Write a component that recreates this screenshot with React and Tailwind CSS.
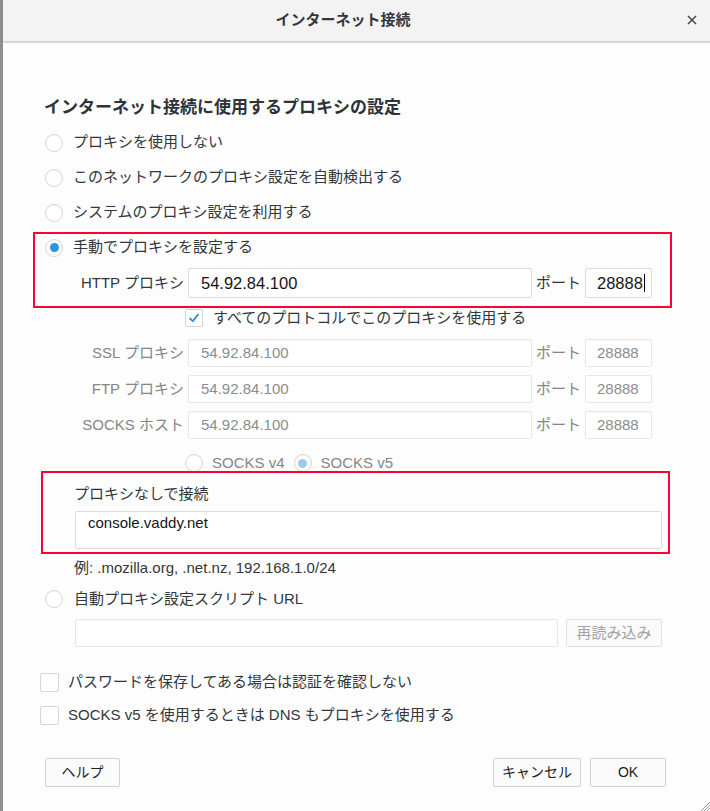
import React from "react";

const font = "font-['Liberation_Sans','Noto_Sans_CJK_JP',sans-serif]";

function Radio({ checked = false, disabled = false }) {
  return (
    <span className="w-[18px] h-[18px] shrink-0 rounded-full border border-[#d6d6d6] bg-white flex items-center justify-center shadow-[inset_0_1px_1px_rgba(0,0,0,0.04)]">
      {checked && (
        <span className={`w-[9px] h-[9px] rounded-full ${disabled ? "bg-[#9ccbea]" : "bg-[#2a96dc]"}`} />
      )}
    </span>
  );
}

function Checkbox({ checked = false, size = "w-[18px] h-[18px]" }) {
  return (
    <span className={`${size} shrink-0 rounded-[2px] border border-[#d6d6d6] bg-white flex items-center justify-center`}>
      {checked && (
        <svg width="12" height="12" viewBox="0 0 12 12">
          <path d="M2 6.5 L4.8 9.2 L10 2.6" fill="none" stroke="#2a8fd8" strokeWidth="1.8" strokeLinecap="round" strokeLinejoin="round" />
        </svg>
      )}
    </span>
  );
}

function ProxyRow({ label, value, port, enabled = false, rowH = "h-[36px]", inputH = "h-[28px]" }) {
  const valueText = enabled ? "text-[16.5px] text-[#151515]" : "text-[15px] text-[#8c8c8c]";
  return (
    <div className={`flex items-center ${rowH}`}>
      <span className={`w-[140px] text-right text-[15px] ${enabled ? "text-[#33373b]" : "text-[#868686]"}`}>{label}</span>
      <div className={`ml-[4px] w-[344px] ${inputH} bg-white border ${enabled ? "border-[#dcdcdc]" : "border-[#e6e6e6]"} rounded-[2px] flex items-center pl-[12px] ${valueText}`}>
        {value}
      </div>
      <span className={`w-[53px] pl-[4px] text-[15px] ${enabled ? "text-[#33373b]" : "text-[#868686]"}`}>ポート</span>
      <div className={`w-[67px] ${inputH} bg-white border ${enabled ? "border-[#dcdcdc]" : "border-[#e6e6e6]"} rounded-[2px] flex items-center pl-[11px] ${valueText}`}>
        {port}
        {enabled && <span className="ml-[1px] w-[1px] h-[18px] bg-black" />}
      </div>
    </div>
  );
}

export default function App() {
  return (
    <div className={`relative w-[710px] h-[811px] flex bg-[#fdfdfd] overflow-hidden ${font}`}>
      <div className="w-[3px] shrink-0 bg-[#8e8e8e]" />
      <div className="flex-1 flex flex-col">
        {/* Header */}
        <div className="h-[43px] shrink-0 bg-[#f3f3f3] border-b-2 border-[#d7d7d7] flex items-center justify-center pr-[27px] relative">
          <span className="text-[15px] font-bold text-[#34383d]">インターネット接続</span>
          <svg className="absolute right-[13px] top-[15px]" width="10" height="10" viewBox="0 0 10 10">
            <path d="M1 1 L9 9 M9 1 L1 9" stroke="#43474c" strokeWidth="1.5" />
          </svg>
        </div>

        {/* Body */}
        <div className="flex flex-col pl-[41px] pr-[44px] text-[15px] text-[#33373b]">
          <div className="mt-[53px] h-[24px] leading-[24px] text-[17px] font-bold text-[#2f3338]">
            インターネット接続に使用するプロキシの設定
          </div>

          <div className="mt-[5px] h-[35px] flex items-center">
            <span className="ml-[1px]"><Radio /></span>
            <span className="ml-[10px]">プロキシを使用しない</span>
          </div>
          <div className="h-[35px] flex items-center">
            <span className="ml-[1px]"><Radio /></span>
            <span className="ml-[10px]">このネットワークのプロキシ設定を自動検出する</span>
          </div>
          <div className="h-[35px] flex items-center">
            <span className="ml-[1px]"><Radio /></span>
            <span className="ml-[10px]">システムのプロキシ設定を利用する</span>
          </div>
          <div className="h-[35px] flex items-center">
            <span className="ml-[1px]"><Radio checked /></span>
            <span className="ml-[10px]">手動でプロキシを設定する</span>
          </div>

          <ProxyRow label="HTTP プロキシ" value="54.92.84.100" port="28888" enabled inputH="h-[30px]" />

          <div className="h-[34px] flex items-center">
            <span className="ml-[141px]"><Checkbox checked /></span>
            <span className="ml-[10px]">すべてのプロトコルでこのプロキシを使用する</span>
          </div>

          <ProxyRow label="SSL プロキシ" value="54.92.84.100" port="28888" />
          <ProxyRow label="FTP プロキシ" value="54.92.84.100" port="28888" />
          <ProxyRow label="SOCKS ホスト" value="54.92.84.100" port="28888" />

          <div className="h-[40px] flex items-center text-[#868686]">
            <span className="ml-[141px]"><Radio /></span>
            <span className="ml-[9px]">SOCKS v4</span>
            <span className="ml-[9px]"><Radio checked disabled /></span>
            <span className="ml-[9px]">SOCKS v5</span>
          </div>

          <div className="h-[22px] flex items-center">
            <span className="ml-[30px]">プロキシなしで接続</span>
          </div>
          <div className="mt-[6px] ml-[31px] w-[587px] h-[38px] bg-white border border-[#dcdcdc] rounded-[2px] pl-[12px] pt-[1px] leading-[20px] text-[15px] text-[#151515]">
            console.vaddy.net
          </div>

          <div className="mt-[8px] h-[22px] flex items-center">
            <span className="ml-[30px]">例: .mozilla.org, .net.nz, 192.168.1.0/24</span>
          </div>

          <div className="h-[40px] flex items-center">
            <span className="ml-[1px]"><Radio /></span>
            <span className="ml-[11px]">自動プロキシ設定スクリプト URL</span>
          </div>
          <div className="h-[28px] flex">
            <div className="ml-[31px] w-[483px] h-[28px] bg-white border border-[#e6e6e6] rounded-[2px]" />
            <div className="ml-[8px] w-[96px] h-[28px] bg-[#fafafa] border border-[#e3e3e3] rounded-[2px] flex items-center justify-center text-[15px] text-[#a3a3a3]">
              再読み込み
            </div>
          </div>

          <div className="mt-[24px] h-[22px] flex items-center">
            <span className="ml-[-4px]"><Checkbox size="w-[19px] h-[19px]" /></span>
            <span className="ml-[9px]">パスワードを保存してある場合は認証を確認しない</span>
          </div>
          <div className="mt-[11px] h-[22px] flex items-center">
            <span className="ml-[-4px]"><Checkbox size="w-[19px] h-[19px]" /></span>
            <span className="ml-[9px]">SOCKS v5 を使用するときは DNS もプロキシを使用する</span>
          </div>

          <div className="mt-[32px] h-[29px] flex justify-between">
            <div className="ml-[1px] w-[75px] h-[29px] bg-[#fbfbfb] border border-[#d2d2d2] rounded-[2px] flex items-center justify-center text-[14px] text-[#222]">
              ヘルプ
            </div>
            <div className="flex gap-[9px]">
              <div className="w-[88px] h-[29px] bg-[#fbfbfb] border border-[#d2d2d2] rounded-[2px] flex items-center justify-center text-[14px] text-[#222]">
                キャンセル
              </div>
              <div className="w-[76px] h-[29px] bg-[#fbfbfb] border border-[#d2d2d2] rounded-[2px] flex items-center justify-center text-[14px] text-[#222]">
                OK
              </div>
            </div>
          </div>
        </div>
      </div>

      {/* Annotation boxes */}
      <div className="absolute left-[33px] top-[232px] w-[639px] h-[76px] border-2 border-[#ff0033] pointer-events-none" />
      <div className="absolute left-[41px] top-[471px] w-[629px] h-[83px] border-2 border-[#ff0033] pointer-events-none" />

      {/* Resize grip */}
      <svg className="absolute right-0 bottom-0" width="12" height="12" viewBox="0 0 12 12">
        <path d="M12 3 L3 12 M12 6 L6 12 M12 9 L9 12" stroke="#9a9a9a" strokeWidth="1" />
      </svg>
    </div>
  );
}
